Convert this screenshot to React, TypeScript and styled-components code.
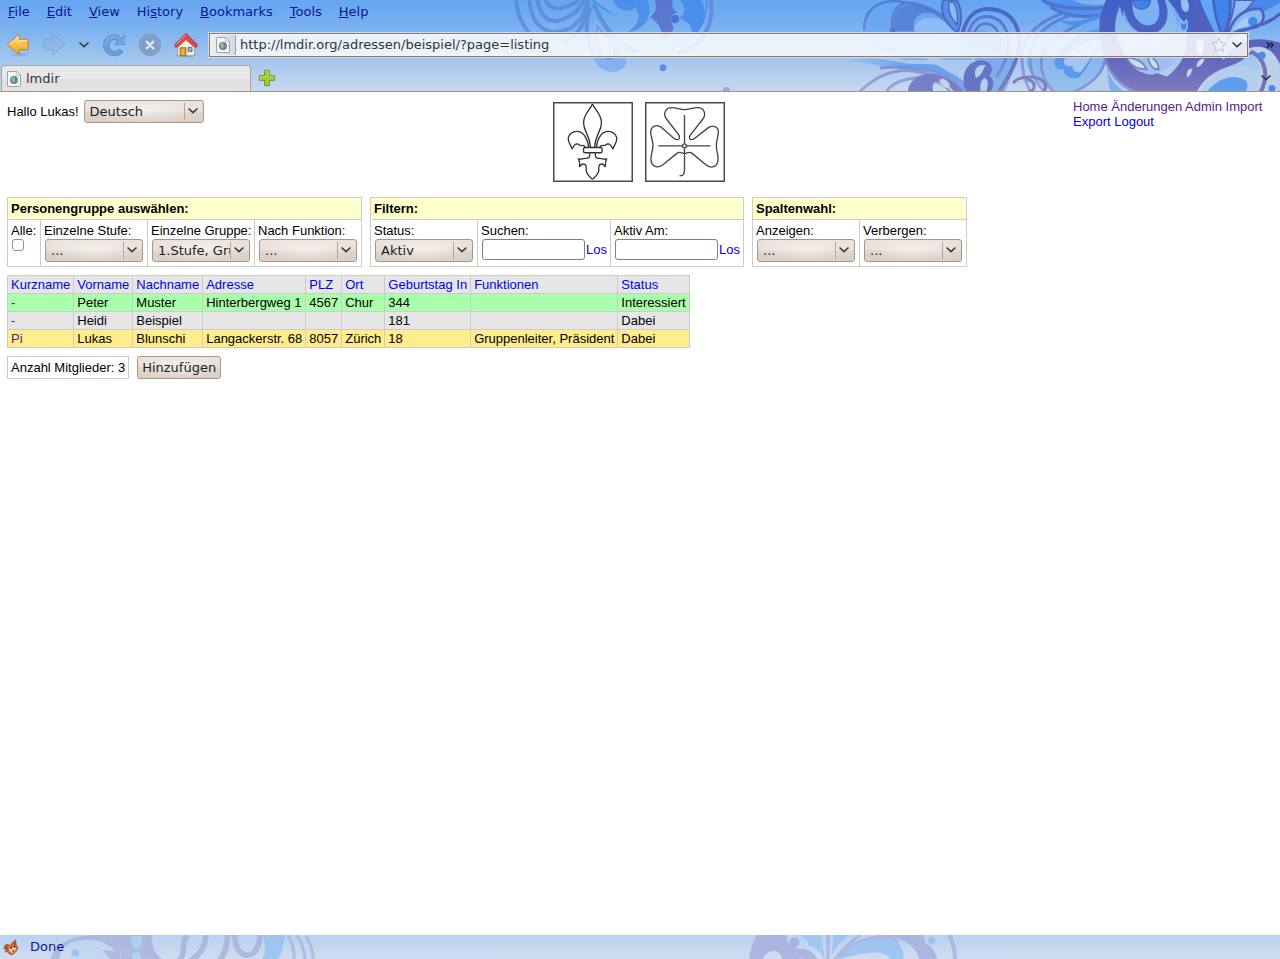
import React from "react";
import styled, { createGlobalStyle, css } from "styled-components";

const ui = `"DejaVu Sans", sans-serif`;
const page = `"Liberation Sans", Arial, sans-serif`;

const GlobalStyle = createGlobalStyle`
  * { box-sizing: border-box; }
  html, body { margin: 0; padding: 0; background: #fff; }
  button, input, select { font: inherit; margin: 0; }
`;

const Window = styled.div`
  min-height: 100vh;
  display: flex;
  flex-direction: column;
  font: 13px/15px ${page};
  color: #000;
`;

/* ---------- browser chrome ---------- */

const Chrome = styled.header`
  position: relative;
  overflow: hidden;
  font: 13px/16px ${ui};
  background: linear-gradient(#65a6f0 0, #76aff1 24px, #a3c6ee 60px, #c8d8ef 91px);
  border-bottom: 1px solid #9c968e;
`;

const Backdrop = styled.svg<{ $side: "left" | "right" }>`
  position: absolute;
  top: 0;
  ${(p) => p.$side}: 0;
  pointer-events: none;
`;

const ChromeRows = styled.div`
  position: relative;
`;

const MenuBar = styled.nav`
  display: flex;
  gap: 1px;
  height: 24px;
`;

const MenuItem = styled.button`
  border: 0;
  background: none;
  padding: 0 8px;
  color: #0b1596;
  font: 13px/24px ${ui};
`;

const Toolbar = styled.div`
  display: flex;
  align-items: center;
  gap: 10px;
  height: 41px;
  padding-left: 6px;
`;

const ToolButtons = styled.div`
  display: flex;
  align-items: center;
  gap: 12px;
`;

const IconButton = styled.button<{ $w?: number }>`
  display: flex;
  align-items: center;
  justify-content: center;
  width: ${(p) => p.$w ?? 24}px;
  height: 24px;
  flex: none;
  padding: 0;
  border: 0;
  background: none;
  color: #2c2c2c;
`;

const AddressBar = styled.div`
  flex: 1;
  display: flex;
  align-items: center;
  height: 26px;
  border: 1px solid #dcd8da;
  box-shadow: inset 0 0 0 1px #8d7870;
  background: rgba(250, 251, 255, 0.86);
  padding: 2px;
`;

const Identity = styled.span`
  display: flex;
  align-items: center;
  justify-content: center;
  align-self: stretch;
  width: 25px;
  background: linear-gradient(90deg, #eeeeef, #d8d9de);
  border-right: 1px solid #a99b98;
`;

const Address = styled.input`
  flex: 1;
  min-width: 0;
  border: 0;
  outline: 0;
  background: none;
  padding: 0 4px;
  color: #2e3436;
  font: 13px/20px ${ui};
`;

const TabStrip = styled.div`
  display: flex;
  align-items: center;
  height: 26px;
  padding: 0 8px 0 1px;
`;

const Tab = styled.button`
  display: flex;
  align-items: center;
  gap: 5px;
  width: 250px;
  height: 26px;
  padding: 0 5px;
  border: 1px solid #aba5a2;
  border-bottom: 0;
  border-radius: 3px 3px 0 0;
  background: linear-gradient(#e6e8ec, #e8e8ea 50%, #e1dfdf 51%, #e6e4e2);
  color: #33373a;
  font: 13px/24px ${ui};
`;

const NewTab = styled(IconButton)`
  margin: 0 auto 0 4px;
`;

/* ---------- page ---------- */

const Content = styled.main`
  flex: 1;
  display: flex;
  flex-direction: column;
  align-items: flex-start;
  gap: 8px;
  padding: 7px 7px 8px;
`;

const PageHeader = styled.div`
  align-self: stretch;
  display: grid;
  grid-template-columns: 1fr auto 1fr;
  align-items: start;
  padding-bottom: 7px;
`;

const Greeting = styled.label`
  display: flex;
  align-items: center;
  gap: 5px;
  padding-top: 1px;
`;

const Emblems = styled.div`
  display: flex;
  gap: 12px;
  padding: 3px 3px 0 0;
`;

const PageLinks = styled.nav`
  justify-self: end;
  width: 200px;
`;

const Link = styled.a<{ $visited?: boolean }>`
  color: ${(p) => (p.$visited ? "#551a8b" : "#0000ee")};
  text-decoration: none;
`;

const Panels = styled.div`
  display: flex;
  flex-wrap: wrap;
  gap: 8px;
`;

const Panel = styled.section`
  border: 1px solid #ccc;
`;

const PanelTitle = styled.h2`
  margin: 0;
  padding: 3px;
  font: bold 13px/15px ${page};
  background: #ffc;
  border-bottom: 1px solid #ccc;
`;

const Fields = styled.div`
  display: flex;
`;

const Field = styled.div<{ $w: number }>`
  box-sizing: content-box;
  width: ${(p) => p.$w}px;
  height: 40px;
  padding: 3px;
  white-space: nowrap;
  & + & { border-left: 1px solid #ccc; }
  label { display: block; }
`;

const FieldLine = styled.div`
  display: flex;
  align-items: center;
  gap: 1px;
  padding: 1px 0 0 1px;
`;

const raised = css`
  border: 1px solid #a89688;
  border-radius: 3px;
  background: radial-gradient(ellipse 50% 60% at 50% 45%, rgba(255, 255, 255, 0.55), rgba(255, 255, 255, 0)),
    linear-gradient(#eae2dd, #e8dfd9 48%, #dfd3ca 52%, #dccfc5);
  color: #1c1c1c;
  font: 13px/19px ${ui};
`;

const SelectBox = styled.span<{ $w: number }>`
  position: relative;
  display: block;
  width: ${(p) => p.$w}px;
  height: 23px;
  &::after {
    content: "";
    position: absolute;
    top: 3px;
    bottom: 3px;
    right: 19px;
    width: 1px;
    background: #b7a79b;
  }
  svg { position: absolute; right: 5px; top: 7px; pointer-events: none; }
`;

const Select = styled.select`
  appearance: none;
  display: block;
  width: 100%;
  height: 23px;
  padding: 0 18px 1px 5px;
  ${raised}
`;

const TextInput = styled.input`
  width: 103px;
  height: 21px;
  padding: 0 4px;
  border: 1px solid #8f7d70;
  border-radius: 3px;
  background: #fff;
`;

const Tick = styled.input`
  appearance: none;
  width: 12px;
  height: 12px;
  border: 1px solid #a08f82;
  border-radius: 3px;
  background: #fff;
`;

const Members = styled.table`
  border-collapse: collapse;
  th, td {
    border: 1px solid #ccc;
    padding: 1px 3px;
    text-align: left;
    font-weight: normal;
    white-space: nowrap;
  }
`;

const MemberRow = styled.tr<{ $tone: string }>`
  background: ${(p) => p.$tone};
`;

const Footer = styled.div`
  display: flex;
  gap: 8px;
`;

const Count = styled.div`
  border: 1px solid #ccc;
  padding: 3px;
`;

const PushButton = styled.button`
  ${raised}
  height: 23px;
  padding: 0 4px 1px;
  min-width: 84px;
`;

const StatusBar = styled.footer`
  position: relative;
  overflow: hidden;
  height: 24px;
  background: linear-gradient(#b7d2ef, #cfdcf0);
  font: 13px/24px ${ui};
  color: #0b1596;
`;

const StatusRow = styled.div`
  position: relative;
  display: flex;
  align-items: center;
  gap: 11px;
  padding-left: 3px;
`;

/* ---------- drawings ---------- */

const Chevron = () => (
  <svg width="12" height="8" viewBox="0 0 12 8" fill="none">
    <path d="M1.500 1.500 6 5.600l4.500-4.100" stroke="#3a3a38" strokeWidth="1.600" />
  </svg>
);

const PageIcon = () => (
  <svg width="14" height="16" viewBox="0 0 42 48">
    <path d="M5 1h24l12 12v30q0 4-4 4H5q-4 0-4-4V5q0-4 4-4z" fill="#f4f5f3" stroke="#8b9694" strokeWidth="3" />
    <path d="M28 2v8q0 4 4 4h8" fill="#fff" stroke="#8b9694" strokeWidth="2" />
    <circle cx="21" cy="27" r="11" fill="#5480bd" stroke="#496a90" strokeWidth="2" />
    <path d="M13 22q7-7 11-3l-3 5 4 4-5 7q-8-3-7-13zM27 28l4-3-3 8z" fill="#9fbd78" />
  </svg>
);

const BackIcon = ({ muted }: { muted?: boolean }) => (
  <svg width="24" height="24" viewBox="0 0 72 72" opacity={muted ? 0.6 : 1}>
    <defs>
      <linearGradient id="arrow" x2="0" y2="1">
        <stop stopColor="#ffe3a0" />
        <stop offset=".5" stopColor="#f6bf4f" />
        <stop offset="1" stopColor="#e9a92d" />
      </linearGradient>
    </defs>
    {!muted && <ellipse cx="40" cy="66" rx="26" ry="4" fill="#5f7488" opacity=".2" />}
    <path
      d="M4 35 39 4v15h27v31H39v15z"
      transform={muted ? "translate(72 0) scale(-1 1)" : undefined}
      fill={muted ? "#8db7e2" : "url(#arrow)"}
      stroke={muted ? "#6c9dce" : "#bd8219"}
      strokeWidth="3"
      strokeLinejoin="round"
    />
    {!muted && <path d="m9 35 27-24v11h27" fill="none" stroke="#ffedbd" strokeWidth="2" />}
  </svg>
);

const ReloadIcon = () => (
  <svg width="24" height="24" viewBox="0 0 72 72">
    <path
      d="M68 5v30H38l10-10C38 15 22 21 21 36c0 17 19 25 31 12l11 9C50 72 30 72 17 61 2 50 0 29 13 15 25 2 45 2 58 15z"
      fill="#669fda"
      stroke="#4f8ac9"
      strokeWidth="2"
      strokeLinejoin="round"
    />
    <path d="M64 14v17H47M11 36C12 12 38 3 55 20" fill="none" stroke="#a2caf0" strokeWidth="2" />
  </svg>
);

const StopIcon = () => (
  <svg width="24" height="24" viewBox="0 0 72 72">
    <circle cx="36" cy="36" r="32" fill="#819dc3" stroke="#7591ba" strokeWidth="2" />
    <circle cx="36" cy="36" r="28" fill="none" stroke="#91abcd" strokeWidth="2" />
    <path d="m26 26 20 20M46 26 26 46" stroke="#dbe8f8" strokeWidth="7" strokeLinecap="round" />
  </svg>
);

const HomeIcon = () => (
  <svg width="24" height="24" viewBox="0 0 72 72">
    <ellipse cx="36" cy="68" rx="30" ry="4" fill="#4e6278" opacity=".35" />
    <path d="M11 34 36 11l25 23v34H11z" fill="#f3f1ec" stroke="#8b8780" strokeWidth="2" />
    <path d="M18 44h18v24H18z" fill="#d99320" stroke="#935c10" strokeWidth="2" />
    <path d="M22 48h9v18h-9z" fill="#eeb448" />
    <path d="M42 43h12v12H42z" fill="#9bb3c7" stroke="#6b7175" strokeWidth="3" />
    <path d="M36 1 69 34v8h-8L36 20 11 42H3v-8z" fill="#d94a4a" stroke="#a92e36" strokeWidth="2" strokeLinejoin="round" />
    <path d="M36 6 8 34" stroke="#f49a94" strokeWidth="3" />
  </svg>
);

const StarIcon = () => (
  <svg width="18" height="18" viewBox="0 0 18 18">
    <path
      d="m9 2 2 4.800 5.200.4-4 3.400 1.300 5L9 12.900l-4.500 2.700 1.300-5-4-3.400L7 6.800z"
      fill="#f1f2fa"
      stroke="#c0c0ca"
      strokeLinejoin="round"
    />
  </svg>
);

const PlusIcon = () => (
  <svg width="18" height="18" viewBox="0 0 54 54">
    <path d="M20 4h14v16h16v14H34v16H20V34H4V20h16z" fill="#a8cb3c" stroke="#6f9220" strokeWidth="3" strokeLinejoin="round" />
    <path d="M23 7h8v16h16" fill="none" stroke="#d6e88d" strokeWidth="2" />
    <path d="M7 31V23h16" fill="none" stroke="#d6e88d" strokeWidth="2" />
  </svg>
);

const MoreIcon = () => (
  <svg width="8" height="6" viewBox="0 0 8 6" fill="none" stroke="#111" strokeWidth="1.200">
    <path d="m1 .5 2.500 2.500L1 5.500M4.500.5 7 3 4.500 5.500" />
  </svg>
);

const FoxIcon = () => (
  <svg width="16" height="18" viewBox="0 0 48 54">
    <path d="m5 22 7-3 9 3L37 5l3 15 5 10-7 12-11 9-9-4-3-6-9 1 4-7-9-5 7-2z" fill="#d76b35" stroke="#8f492c" strokeWidth="2" />
    <path d="m18 28 7 6 10-9 4 4-3 11-8 5-8-5z" fill="#f4d7bb" />
    <path d="m32 18 4-8 1 11z" fill="#68352d" />
    <circle cx="24" cy="30" r="2.500" fill="#362220" />
    <circle cx="35" cy="26" r="2.500" fill="#362220" />
    <path d="m28 38 5-1-2 4zM6 31l9 2M5 25l9 1" fill="#3a2521" stroke="#713c2b" strokeWidth="3" />
  </svg>
);

const lilyHalf = (
  <>
    <path d="M158 27c-7 17-27 31-27 57 1 27 18 34 21 73" />
    <path d="M97 163c-5-14-14-21-12-34 5-21 33-27 48-8 8 11 12 23 13 37" />
    <path d="M97 163c4-12 9-16 15-16 6 1 6 7 13 5 6-1 10 2 12 6" />
    <path d="M149 175c3 8-1 17-11 16-9-1-14 4-22 2 4 8 4 15 3 24 4-8 9-10 14-9 8 2 6 9 6 18 0 14 12 21 19 28" />
  </>
);

const Lily = () => (
  <svg width="80" height="80" viewBox="39 21 241 241" fill="none" stroke="#333" strokeWidth="4" role="img" aria-label="Lilie">
    <rect x="41" y="23" width="237" height="237" stroke="#4a4a4a" strokeWidth="5" />
    {lilyHalf}
    <g transform="translate(316 0) scale(-1 1)">{lilyHalf}</g>
    <rect x="131" y="158" width="56" height="16" rx="5" fill="#fff" />
  </svg>
);

const Clover = () => (
  <svg width="80" height="80" viewBox="315 21 241 241" fill="none" stroke="#444" strokeWidth="4" role="img" aria-label="Kleeblatt">
    <rect x="317" y="23" width="237" height="237" stroke="#4a4a4a" strokeWidth="5" />
    <path d="M416 133c5-4 3-11-2-17l-36-46c-9-16 0-32 17-32 16 0 24 6 39 6s23-6 41-6c16 0 25 16 16 32l-36 46c-6 7-8 14-4 17s10 1 17-5l37-29c14-11 31-3 31 11 0 16-6 24-6 42s6 26 5 43c-1 20-18 28-34 17l-45-37c-8-6-14 1-22 1s-14-7-22-1l-44 36c-16 11-33 4-35-15-1-17 6-27 6-44s-7-27-7-41c1-17 18-25 33-13l34 30c7 6 13 8 17 5z" />
    <path d="M434 60v86M355 153h72M441 153h71M434 160v64c0 13-4 20-15 19" />
    <circle cx="434" cy="153" r="6" fill="#fff" />
  </svg>
);

const blue = "#458aea";
const violet = "#5260bf";

/* Flourishes behind the menu and toolbar, drawn at three units per pixel. */
const ChromeFlourish = () => (
  <Backdrop $side="right" width="1280" height="92" viewBox="0 0 3840 276" fill="none">
    <defs>
      <linearGradient id="fade" x1="0" y1="0" x2="0" y2="276" gradientUnits="userSpaceOnUse">
        <stop stopColor="#4a72d0" />
        <stop offset=".6" stopColor="#6f83d0" />
        <stop offset="1" stopColor="#9298d2" />
      </linearGradient>
      <linearGradient id="deep" x1="0" y1="0" x2="0" y2="276" gradientUnits="userSpaceOnUse">
        <stop stopColor="#3f5fc6" />
        <stop offset=".6" stopColor="#5f66bd" />
        <stop offset="1" stopColor="#7f7abc" />
      </linearGradient>
      <linearGradient id="pale" x1="0" y1="0" x2="0" y2="276" gradientUnits="userSpaceOnUse">
        <stop stopColor="#78b0f1" />
        <stop offset="1" stopColor="#bfd3ee" />
      </linearGradient>
      <linearGradient id="enter" x1="0" x2="200" y1="0" y2="0" gradientUnits="userSpaceOnUse">
        <stop stopColor="#6aa5ee" stopOpacity=".1" />
        <stop offset="1" stopColor={blue} stopOpacity=".65" />
      </linearGradient>
    </defs>

    <g transform="translate(1200 0)">
      <g stroke="#5685d7" strokeWidth="12" opacity=".7">
        <path d="M349 0c2 60 38 120 105 147M388 0c4 66 40 98 80 96 56-4 88-44 94-96M412 0c8 50 36 68 62 62 42-10 68-34 76-62M437 0c8 22 32 30 54 22 22-6 38-14 44-22" />
        <path d="M564 0c-2 60-22 100-72 130M572 20c-20 50-16 110 20 160M580 10c26 60 70 130 130 144M932 0c12 70-22 138-98 160" />
        <path d="M920 0c6 70-44 130-110 140" strokeWidth="5" />
      </g>
      <path d="M574 0h168c20 42-5 92-60 96 30-18 44-46 28-66-30 34-84 18-136-30z" fill={blue} opacity=".8" />
      <path d="M640 0c6 28 42 44 72 20-8 34-46 40-70 22-22-14-46-30-60-42z" fill="#70aaf1" />
      <path d="M764 0h54c-4 20 2 34 16 36-22 6-30 22-16 38 8 20-14 38-34 42 6-36-16-50-34-66 18-10 22-30 14-50z" fill={violet} opacity=".7" />
      <path d="M840 0h62c22 34 16 82-28 114 10-44-18-50-36-60 22-14 18-34 2-54z" fill={blue} opacity=".85" />
      <circle cx="825" cy="57" r="13" fill="#4c72cf" />
      <path d="M582 54c34 50 90 90 98 132-10 40-76 40-94-2-14-30-6-92-4-130z" fill="#82b2f0" />
      <path d="M592 78c24 32 52 56 52 84-10 24-36 16-44-8-8-22-8-50-8-76z" fill="#a0bfe9" stroke="#6d97dc" strokeWidth="5" />
      <circle cx="789" cy="203" r="10" fill="#5b8de0" />
      <circle cx="979" cy="272" r="11" fill="#a6a6d6" />
    </g>

    <g transform="translate(2520 0)">
      <path d="M78 96C66 30 110 2 160 4c90-10 150 20 196 92l40 84H190C120 150 90 130 78 96z" fill="#62a2ef" opacity=".5" />
      <path d="M72 92C70 28 118-2 176 4s128 26 180 104M158 92c-10-60 18-90 66-82 54 10 96 40 134 84" stroke="url(#fade)" strokeWidth="7" opacity=".8" />
      <path d="M164 94C150 44 176 10 220 14c30 4 66 16 90 36-60-26-96-8-88 44z" fill="#4d75cf" opacity=".7" />
      <path d="M222 92c4-38 50-50 94-26 20 12 34 30 40 50z" fill="#8dbcf3" />
      <path d="M310 0c-12 28 0 66 42 98 18-36 12-74-2-98z" fill="#588fe4" stroke="#466fcd" strokeWidth="6" />
      <path d="M328 6c-6 28 6 48 22 68 6-26 0-50-10-68z" fill="#8abaf1" stroke="#4966be" strokeWidth="4" />
      <circle cx="158" cy="90" r="9" fill="#5678cb" />
      <path d="M366 100c-6 80 90 80 86 174h44c26-60 40-114-8-160-46-26-86-30-122-14z" fill="#5b99eb" opacity=".6" />
      <path d="M368 98c14-56 48-76 90-70 72 10 96 80 70 150-10 32-28 62-50 96" stroke="url(#deep)" strokeWidth="12" opacity=".9" />
      <path d="M384 104c10-42 36-58 66-54 46 8 66 60 50 116-6 26-18 46-32 66" stroke="url(#fade)" strokeWidth="9" />
      <path d="M400 108c8-30 26-42 46-36 30 8 40 46 30 84" stroke="url(#fade)" strokeWidth="8" />
      <path d="M0 188c70-22 140-10 194 2 80 10 150-20 196 90h-32c-20-50-70-72-140-72-90 0-140-30-218-20z" fill="url(#enter)" />
      <path d="M120 204c50-4 90-2 130 5 54 8 90 28 116 66M60 275c50-50 110-72 174-60 50 8 94 30 112 60M140 275c20-36 90-50 140-34 22 8 40 18 50 34" stroke="url(#fade)" strokeWidth="9" opacity=".8" />
      <path d="M250 172c50-10 90 20 120 70-40-24-84-50-120-70z" fill="#a9c8f0" />
      <path d="M204 275c0-40 54-66 94-50 32 10 58 30 72 50h-26c-14-20-42-36-60-28-8 8-6 18-4 28z" fill="#797fc6" />
      <ellipse cx="314" cy="250" rx="18" ry="10" transform="rotate(40 314 250)" fill="#bdd5ef" />
      <path d="M380 275c-24-46 0-90 40-94 36 0 44 30 28 46 16 12 14 30 4 48z" fill="#6874c4" />
      <path d="M408 234c-10-26 6-44 30-38-10 10-8 28-30 38zM422 275c-4-20 0-34 12-42 14 10 10 26 4 42z" fill="#b4d0f0" />
    </g>

    <g transform="translate(3060 0)">
      <path d="M262 24C170 20 60 60 20 140v60c20 40 50 60 80 76h80c40-10 70-40 86-90z" fill="#6fabf0" opacity=".55" />
      <path d="M262 30C160 28 62 70 36 140c-16 50 0 100 40 136M266 44C190 60 110 100 72 150c-16 36-10 86 30 126M250 22C150 20 20 60 6 160c-2 40 6 80 26 116" stroke="url(#fade)" strokeWidth="9" opacity=".8" />
      <path d="M66 0h90c30 16 80 22 124 16l-10 34c-80 6-160-4-204-50z" fill="#4f91eb" />
      <path d="M66 0c40 24 120 32 204 20M90 20c46 32 110 34 168 24" stroke="url(#fade)" strokeWidth="10" />
      <path d="M160 2c36 14 76 12 108 4V0z" fill="#7fb4f2" />
      <path d="M110 58c50 14 90 2 140-18-50 40-100 48-140 18z" fill="#4d90eb" />
      <path d="M246 84c-60 10-120 40-140 92-8 20 4 34 26 32-4 16 16 30 44 26 40-40 54-96 70-150z" fill="#5998eb" />
      <path d="M234 118c-50 14-90 36-104 66 2 14 14 18 28 14-2 16 12 22 24 18 26-30 42-64 52-98z" fill="#a2c6f1" />
      <path d="M258 0h60c-14 50-16 100 10 150 34 50 84 74 136 86v40H330c-60-40-80-100-90-160-6-50 2-80 18-116z" fill="url(#deep)" />
      <path d="M300 18c-26 60-22 128 50 146 60 10 110-26 122-84l-16-80h-30c20 60 4 104-40 106-46-2-76-36-86-88z" fill="url(#pale)" />
      <path d="M310 0c0 60 30 104 78 102 52-4 66-56 46-102h-22c14 40 4 74-24 76-30-2-46-40-42-76z" fill="url(#deep)" />
      <path d="M338 0c-6 40 14 76 48 76 30-4 36-40 24-76z" fill="#7db2f2" />
      <path d="M338 0c2 18 12 28 28 28 14-2 24-12 26-28z" fill="#3f84e8" stroke="#4666c6" strokeWidth="4" />
      <path d="M300 130c30 44 80 56 134 34 26-16 40-40 44-80 20 70-20 130-82 140-50-2-84-44-96-94z" fill="#9cc1f0" />
      <path d="M320 172c30 4 48 12 60 36-26 0-48-8-60-36zM384 168c20 6 32 20 32 40-16 2-30-14-32-40z" fill="#cbdcf2" stroke="#747cc3" strokeWidth="5" />
      <path d="M256 176c-6 44-40 76-96 100h184c-44-20-74-50-88-100z" fill="#b3cdef" stroke="url(#fade)" strokeWidth="8" />
      <path d="M262 200c4 30 24 54 50 76h-40c-8-24-10-50-10-76z" fill="#7db0ee" />

      <path d="M444 0h88c24 48 52 90 58 160l22 20c26-56 90-76 168-52v64c-22-44-64-44-100-22-44 40-106 24-150 106H318c100-14 166-66 180-130 10-54-16-100-54-146z" fill="url(#deep)" />
      <path d="M520 0c-4 60 6 108 40 168l40 12c-6-60-28-110-54-140-10-20-10-26-10-40z" fill={violet} />
      <path d="M482 0c0 22 6 36 18 36 10-6 8-24 2-36zM482 56c-8 18-4 38 8 44 14-4 18-24 10-44l-8 10z" fill="#8fc0f5" />
      <path d="M484 66c-4 12 0 24 6 26 10-4 12-14 8-26l-7 6z" fill={blue} />
      <path d="M534 116c-8 24-4 44 8 50 10-4 12-26 4-50l-6 10z" fill="#c4daf5" stroke="#8793d2" strokeWidth="3" />
      <path d="M528 204c0-20 14-32 28-28-6 8-6 22-28 28zM500 234c-4-20 4-30 20-30-6 8-2 22-20 30z" fill="#c4d9f1" stroke="#6c74bd" strokeWidth="3" />

      <path d="M536 0h44c8 40 14 70 28 104l-18 20c-20-50-40-84-54-124z" fill="#62a6f1" />
      <path d="M582 0h46c4 40-4 74-20 106-14-34-22-70-26-106z" fill="#3f84e8" />
      <path d="M536 0c14 44 36 80 56 122M580 0c4 40 12 74 28 108M630 0c4 40-4 72-20 106" stroke="url(#deep)" strokeWidth="8" />
      <path d="M644 0h60c-24 36-60 60-90 104 16-36 28-68 30-104z" fill="#8cbdf5" stroke={violet} strokeWidth="6" />
      <path d="M704 0h76v8c-60 36-110 50-160 96 20-40 60-60 84-104z" fill={blue} />
      <path d="M624 110c8-50 40-84 96-84 20 20 10 50-20 58-34 6-54 6-76 26z" fill="#85b9f4" stroke={violet} strokeWidth="8" />
      <path d="M640 94c10-26 30-44 56-44 14 10 10 24-10 28-18 4-30 4-46 16z" fill="#a4ccf7" />
      <circle cx="698" cy="64" r="14" fill={blue} />
      <path d="M620 116c40-34 120-34 160-76" stroke={violet} strokeWidth="10" />

      <path d="M676 148c56-24 104 10 104 70v58h-84c44-40 34-96-20-128z" fill="#bcd0ec" />
      <path d="M692 154c44 20 56 70 30 122" stroke="#7273b8" strokeWidth="12" />
      <path d="M540 276c30-60 92-90 140-72 36 14 40 44 24 72z" fill="#b6cdef" />
      <path d="M560 276c34-42 80-56 114-36 12 8 10 24 2 36z" fill="#5f9eed" />
      <circle cx="726" cy="166" r="11" fill={blue} />
      <circle cx="756" cy="265" r="10" fill={blue} />
      <path d="M-20 250c10-22 70-26 92-4 12 18 0 34-18 36M20 238c30 6 30 36 0 40" stroke="#7b80c4" strokeWidth="9" />
    </g>
  </Backdrop>
);

const StatusFlourish = () => (
  <Backdrop $side="left" width="1280" height="24" viewBox="0 0 3136 59" fill="none">
    <g transform="translate(0 -28)" opacity=".75">
      <path d="M114 102c10-46 44-74 120-74h54c6 24 2 40 0 74h-16c-20-44-60-68-96-58-24 10-42 28-32 58z" fill="#a8b0dc" />
      <path d="M158 102c-2-24 38-48 70-36 24 8 44 24 60 36z" fill="#c0d8f2" />
      <path d="M184 46c24-12 74-4 94 22-36-2-60-8-94-22z" fill="#c0d8f2" />
      <path d="M288 28h80c0 34 10 54 30 74H292z" fill="#a8b0dc" />
      <path d="M318 30c-4 24 6 34 16 30s14-18 8-30zM320 72c-4 18 4 26 12 24 10-6 12-18 4-28z" fill="#aacff5" />
      <circle cx="180" cy="72" r="9" fill="#90bff0" />
      <path d="M358 28c-8 34 28 70 54 74M400 102c70-10 30-44 56-74M500 28c2 34-28 64-58 74M554 28c0 34-10 56-30 74M572 28c0 66 60 66 62 0" stroke="#a6aedb" strokeWidth="14" />
      <path d="M640 28h54c0 30-10 54-26 74h-40c20-22 24-44 12-74z" fill="#92c0f0" />
      <path d="M702 28c14 22 18 48 14 74M724 28c16 24 22 48 20 74M746 28c14 24 20 48 20 74" stroke="#aab3de" strokeWidth="8" />
    </g>
    <g transform="translate(1568 -28)" opacity=".75">
      <path d="M268 102c0-30 8-56 20-74h72c0 22 18 34 34 34 26 0 44 18 46 40h-16c-12-24-50-20-54 0h-20c4-50-46-44-54 0z" fill="#a3a9dc" />
      <circle cx="380" cy="46" r="12" fill="#9da8dc" />
      <path d="M390 28h54l14 74c-12-34-26-44-44-48 0-10-10-20-24-26z" fill="#99c4f2" />
      <path d="M462 28v74M468 102c30-40 52-60 74-74" stroke="#a4ace0" strokeWidth="8" />
      <path d="M470 84c10-26 26-44 44-56h-38z" fill="#92bff0" />
      <path d="M482 90c50-60 160-80 166-12v24h-30c0-44-60-34-136-12z" fill="#92bff0" />
      <path d="M486 82c50-54 124-60 150-36" stroke="#a4ace0" strokeWidth="8" />
      <path d="M600 28h98c0 14 4 24 12 24 14 14 22 30 24 50h-44c-6-44-34-64-90-74z" fill="#a3abdd" />
      <path d="M760 28c12 24 16 48 14 74" stroke="#a8b0de" strokeWidth="10" />
      <circle cx="717" cy="42" r="9" fill="#90bff0" />
    </g>
  </Backdrop>
);

/* ---------- pieces ---------- */

type DropdownProps = { id: string; value: string; width?: number };

const Dropdown = ({ id, value, width = 98 }: DropdownProps) => (
  <SelectBox $w={width}>
    <Select id={id} defaultValue={value}>
      <option>{value}</option>
    </Select>
    <Chevron />
  </SelectBox>
);

const SelectField = ({ id, label, value }: { id: string; label: string; value: string }) => (
  <Field $w={100}>
    <label htmlFor={id}>{label}</label>
    <FieldLine>
      <Dropdown id={id} value={value} />
    </FieldLine>
  </Field>
);

const SearchField = ({ id, label }: { id: string; label: string }) => (
  <Field $w={126}>
    <label htmlFor={id}>{label}</label>
    <FieldLine>
      <TextInput id={id} type="text" />
      <Link href="#los">Los</Link>
    </FieldLine>
  </Field>
);

const menus: [string, string, string][] = [
  ["", "F", "ile"],
  ["", "E", "dit"],
  ["", "V", "iew"],
  ["Hi", "s", "tory"],
  ["", "B", "ookmarks"],
  ["", "T", "ools"],
  ["", "H", "elp"],
];

const columns = ["Kurzname", "Vorname", "Nachname", "Adresse", "PLZ", "Ort", "Geburtstag In", "Funktionen", "Status"];

const members = [
  { tone: "#aaffaa", cells: ["-", "Peter", "Muster", "Hinterbergweg 1", "4567", "Chur", "344", "", "Interessiert"] },
  { tone: "#e6e6e6", cells: ["-", "Heidi", "Beispiel", "", "", "", "181", "", "Dabei"] },
  {
    tone: "#ffec8b",
    cells: ["Pi", "Lukas", "Blunschi", "Langackerstr. 68", "8057", "Zürich", "18", "Gruppenleiter, Präsident", "Dabei"],
  },
];

export default function App() {
  return (
    <Window>
      <GlobalStyle />
      <Chrome>
        <ChromeFlourish />
        <ChromeRows>
          <MenuBar>
            {menus.map(([before, key, after]) => (
              <MenuItem key={after}>
                {before}
                <u>{key}</u>
                {after}
              </MenuItem>
            ))}
          </MenuBar>
          <Toolbar>
            <ToolButtons>
              <IconButton aria-label="Back"><BackIcon /></IconButton>
              <IconButton aria-label="Forward"><BackIcon muted /></IconButton>
              <IconButton aria-label="Recent pages" $w={12}><Chevron /></IconButton>
              <IconButton aria-label="Reload"><ReloadIcon /></IconButton>
              <IconButton aria-label="Stop"><StopIcon /></IconButton>
              <IconButton aria-label="Home"><HomeIcon /></IconButton>
            </ToolButtons>
            <AddressBar>
              <Identity><PageIcon /></Identity>
              <Address aria-label="Address" defaultValue="http://lmdir.org/adressen/beispiel/?page=listing" />
              <IconButton aria-label="Bookmark" $w={18}><StarIcon /></IconButton>
              <IconButton aria-label="History" $w={18}><Chevron /></IconButton>
            </AddressBar>
            <IconButton aria-label="More tools" $w={21}><MoreIcon /></IconButton>
          </Toolbar>
          <TabStrip>
            <Tab>
              <PageIcon />
              lmdir
            </Tab>
            <NewTab aria-label="New tab"><PlusIcon /></NewTab>
            <IconButton aria-label="All tabs" $w={12}><Chevron /></IconButton>
          </TabStrip>
        </ChromeRows>
      </Chrome>

      <Content>
        <PageHeader>
          <Greeting htmlFor="language">
            Hallo Lukas!
            <Dropdown id="language" value="Deutsch" width={120} />
          </Greeting>
          <Emblems>
            <Lily />
            <Clover />
          </Emblems>
          <PageLinks>
            <Link href="#home" $visited>Home</Link> <Link href="#changes" $visited>Änderungen</Link>{" "}
            <Link href="#admin" $visited>Admin</Link> <Link href="#import" $visited>Import</Link>{" "}
            <Link href="#export">Export</Link> <Link href="#logout">Logout</Link>
          </PageLinks>
        </PageHeader>

        <Panels>
          <Panel>
            <PanelTitle>Personengruppe auswählen:</PanelTitle>
            <Fields>
              <Field $w={26}>
                <label htmlFor="all">Alle:</label>
                <FieldLine>
                  <Tick id="all" type="checkbox" />
                </FieldLine>
              </Field>
              <SelectField id="level" label="Einzelne Stufe:" value="..." />
              <SelectField id="group" label="Einzelne Gruppe:" value="1.Stufe, Gruppe 1" />
              <SelectField id="role" label="Nach Funktion:" value="..." />
            </Fields>
          </Panel>
          <Panel>
            <PanelTitle>Filtern:</PanelTitle>
            <Fields>
              <SelectField id="status" label="Status:" value="Aktiv" />
              <SearchField id="search" label="Suchen:" />
              <SearchField id="active-on" label="Aktiv Am:" />
            </Fields>
          </Panel>
          <Panel>
            <PanelTitle>Spaltenwahl:</PanelTitle>
            <Fields>
              <SelectField id="show" label="Anzeigen:" value="..." />
              <SelectField id="hide" label="Verbergen:" value="..." />
            </Fields>
          </Panel>
        </Panels>

        <Members>
          <thead>
            <MemberRow $tone="#e6e6e6">
              {columns.map((name) => (
                <th key={name} scope="col">
                  <Link href="#sort">{name}</Link>
                </th>
              ))}
            </MemberRow>
          </thead>
          <tbody>
            {members.map(({ tone, cells }) => (
              <MemberRow key={cells[1]} $tone={tone}>
                {cells.map((text, i) => (
                  <td key={columns[i]}>{i === 0 ? <Link href="#member" $visited>{text}</Link> : text}</td>
                ))}
              </MemberRow>
            ))}
          </tbody>
        </Members>

        <Footer>
          <Count>Anzahl Mitglieder: 3</Count>
          <PushButton>Hinzufügen</PushButton>
        </Footer>
      </Content>

      <StatusBar>
        <StatusFlourish />
        <StatusRow>
          <FoxIcon />
          Done
        </StatusRow>
      </StatusBar>
    </Window>
  );
}
